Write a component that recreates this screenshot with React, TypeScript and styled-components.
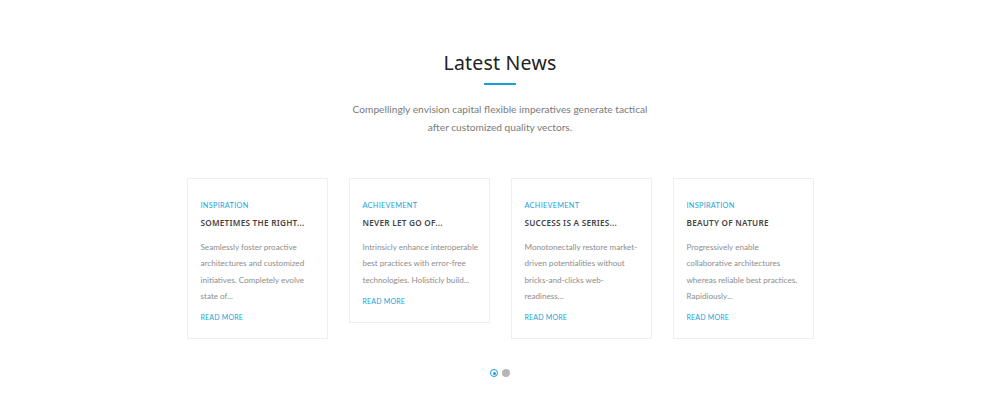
import React from "react";
import styled, { createGlobalStyle } from "styled-components";

const Global = createGlobalStyle`
  html, body { margin: 0; padding: 0; background: #ffffff; }
  body { font-family: "Lato", "Liberation Sans", sans-serif; }
`;

const Section = styled.section`
  width: 1000px;
  height: 410px;
  box-sizing: border-box;
  padding-top: 48px;
  display: flex;
  flex-direction: column;
  align-items: center;
  background: #fff;
`;

const Title = styled.h2`
  margin: 0;
  font-family: "Noto Sans", sans-serif;
  font-weight: 400;
  font-size: 19.5px;
  line-height: 29px;
  color: #222;
  letter-spacing: 0.2px;
`;

const Underline = styled.div`
  width: 32px;
  height: 2px;
  background: #1a9fd6;
  margin-top: 6px;
`;

const Subtitle = styled.p`
  margin: 15px 0 0;
  width: 300px;
  text-align: center;
  font-family: "Lato", sans-serif;
  font-weight: 400;
  font-size: 10.2px;
  line-height: 18px;
  color: #7a7a7a;
`;

const Cards = styled.div`
  margin-top: 42px;
  display: flex;
  align-items: flex-start;
  gap: 21px;
`;

const Card = styled.article`
  width: 141px;
  box-sizing: border-box;
  border: 1px solid #efefef;
  padding: 22px 8px 16px 13px;
  display: flex;
  flex-direction: column;
`;

const Category = styled.div`
  font-family: "Lato", sans-serif;
  font-size: 7.3px;
  line-height: 9px;
  letter-spacing: 0.3px;
  color: #1aa3d9;
  text-transform: uppercase;
`;

const CardTitle = styled.h3`
  margin: 7px 0 0;
  font-family: "Noto Sans", sans-serif;
  font-weight: 600;
  font-size: 8.2px;
  line-height: 12px;
  letter-spacing: 0.25px;
  color: #444;
  text-transform: uppercase;
  white-space: nowrap;
`;

const Excerpt = styled.p`
  margin: 10px 0 0;
  font-family: "Lato", sans-serif;
  font-weight: 400;
  font-size: 8.1px;
  line-height: 16.3px;
  color: #8d8d8d;
`;

const ReadMore = styled.a`
  margin-top: 8px;
  font-family: "Lato", sans-serif;
  font-size: 7px;
  line-height: 10px;
  letter-spacing: 0.2px;
  color: #1aa3d9;
  text-transform: uppercase;
  text-decoration: none;
`;

const Dots = styled.div`
  margin-top: 30px;
  display: flex;
  align-items: center;
  gap: 4px;
`;

const Dot = styled.span<{ $active?: boolean }>`
  width: 8px;
  height: 8px;
  box-sizing: border-box;
  border-radius: 50%;
  background: ${(p) => (p.$active ? "#fff" : "#b5b5b5")};
  border: ${(p) => (p.$active ? "1.5px solid #1a9fd6" : "none")};
  display: flex;
  align-items: center;
  justify-content: center;
  &::after {
    content: "";
    display: ${(p) => (p.$active ? "block" : "none")};
    width: 3px;
    height: 3px;
    border-radius: 50%;
    background: #1a9fd6;
  }
`;

const posts = [
  {
    cat: "Inspiration",
    title: "Sometimes the right...",
    text: "Seamlessly foster proactive architectures and customized initiatives. Completely evolve state of...",
  },
  {
    cat: "Achievement",
    title: "Never let go of...",
    text: "Intrinsicly enhance interoperable best practices with error-free technologies. Holisticly build...",
  },
  {
    cat: "Achievement",
    title: "Success is a series...",
    text: "Monotonectally restore market-driven potentialities without bricks-and-clicks web-readiness...",
  },
  {
    cat: "Inspiration",
    title: "Beauty of nature",
    text: "Progressively enable collaborative architectures whereas reliable best practices. Rapidiously...",
  },
];

export default function App() {
  return (
    <>
      <Global />
      <Section>
        <Title>Latest News</Title>
        <Underline />
        <Subtitle>
          Compellingly envision capital flexible imperatives generate tactical after customized quality vectors.
        </Subtitle>
        <Cards>
          {posts.map((p) => (
            <Card key={p.title}>
              <Category>{p.cat}</Category>
              <CardTitle>{p.title}</CardTitle>
              <Excerpt>{p.text}</Excerpt>
              <ReadMore href="#">Read More</ReadMore>
            </Card>
          ))}
        </Cards>
        <Dots>
          <Dot $active />
          <Dot />
        </Dots>
      </Section>
    </>
  );
}
